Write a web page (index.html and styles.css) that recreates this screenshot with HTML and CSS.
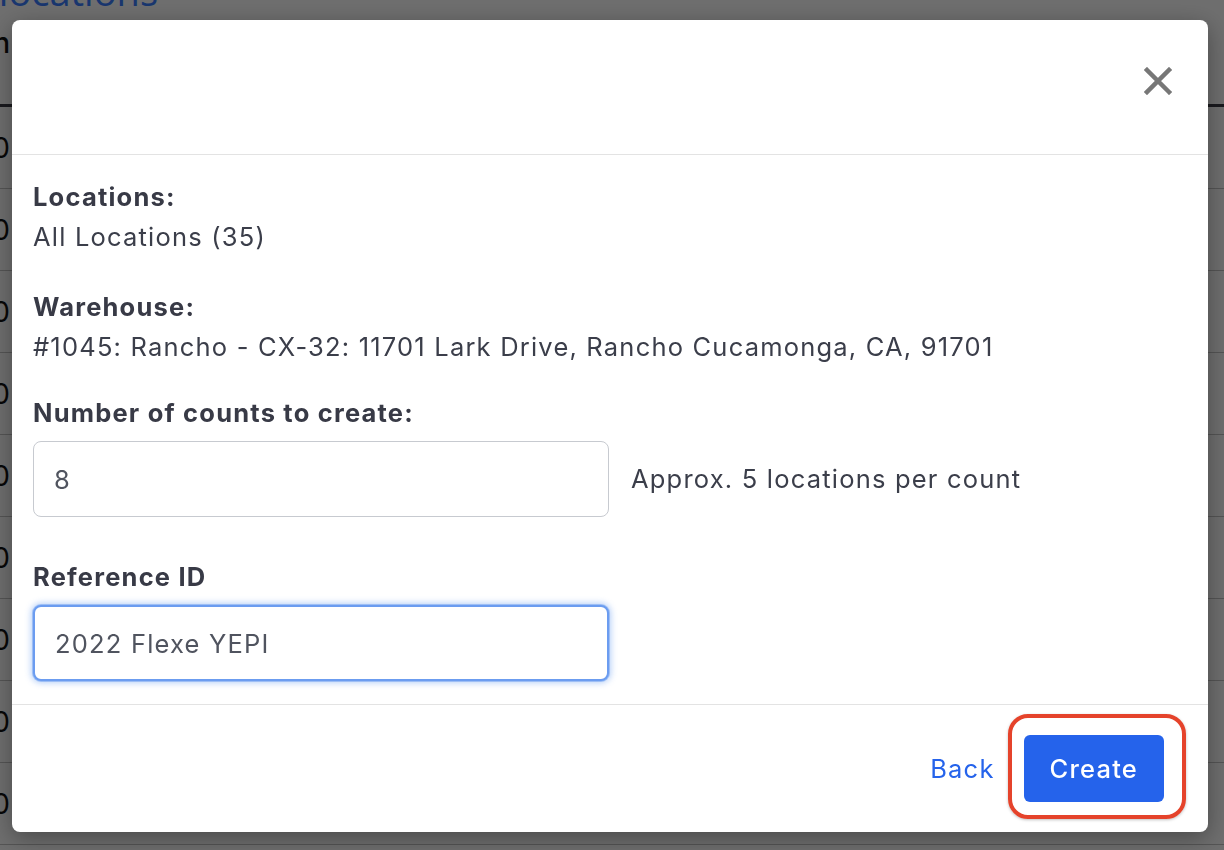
FILE: index.html
```html
<!DOCTYPE html>
<html lang="en">
<head>
  <meta charset="UTF-8">
  <title>Create counts</title>
  <link rel="stylesheet" href="styles.css">
</head>
<body>
  <div class="page">
    <div class="page-title"><h1>Create counts for locations</h1></div>
    <div class="table">
      <div class="table-head"><span class="cell">Location</span></div>
      <div class="table-row"><span class="cell">100</span></div>
      <div class="table-row"><span class="cell">100</span></div>
      <div class="table-row"><span class="cell">100</span></div>
      <div class="table-row"><span class="cell">100</span></div>
      <div class="table-row"><span class="cell">100</span></div>
      <div class="table-row"><span class="cell">100</span></div>
      <div class="table-row"><span class="cell">100</span></div>
      <div class="table-row"><span class="cell">100</span></div>
      <div class="table-row"><span class="cell">100</span></div>
    </div>
  </div>

  <div class="overlay">
    <div class="modal">
      <div class="modal-header">
        <button type="button" class="close-btn" aria-label="Close">
          <svg width="28" height="28" viewBox="0 0 28 28">
            <path d="M3 3 L25 25 M25 3 L3 25" stroke="#777" stroke-width="4.5" stroke-linecap="square" fill="none"/>
          </svg>
        </button>
      </div>
      <div class="modal-body">
        <div class="field field-locations">
          <div class="field-label">Locations:</div>
          <div class="field-value">All Locations (35)</div>
        </div>
        <div class="field field-warehouse">
          <div class="field-label">Warehouse:</div>
          <div class="field-value">#1045: Rancho - CX-32: 11701 Lark Drive, Rancho Cucamonga, CA, 91701</div>
        </div>
        <div class="field field-counts">
          <label class="field-label" for="counts">Number of counts to create:</label>
          <div class="input-row">
            <input type="text" id="counts" class="text-input" value="8">
            <span class="hint">Approx. 5 locations per count</span>
          </div>
        </div>
        <div class="field field-ref">
          <label class="field-label" for="refId">Reference ID</label>
          <div class="input-row">
            <input type="text" id="refId" class="text-input focused" value="2022 Flexe YEPI">
          </div>
        </div>
      </div>
      <div class="modal-footer">
        <a href="#" class="link-btn">Back</a>
        <span class="highlight">
          <button type="button" class="primary-btn">Create</button>
        </span>
      </div>
    </div>
  </div>
</body>
</html>
```

FILE: styles.css
```css
* {
  box-sizing: border-box;
}
html, body {
  margin: 0;
  padding: 0;
  height: 100%;
  overflow: hidden;
}
body {
  font-family: Inter, 'Liberation Sans', Arial, sans-serif;
  background: #fff;
  color: #393c48;
}

/* page behind the dialog */
.page-title {
  display: flex;
  justify-content: flex-end;
  width: 158px;
  height: 42px;
  margin-top: -30px;
}
.page-title h1 {
  margin: 0;
  white-space: nowrap;
  font-family: 'Open Sans', Lato, sans-serif;
  font-size: 38px;
  font-weight: 500;
  line-height: 42px;
  color: #3a7dff;
}
.table {
  width: 100%;
}
.table-head,
.table-row {
  display: flex;
  width: 100%;
}
.cell {
  display: flex;
  justify-content: flex-end;
  width: 10px;
  white-space: nowrap;
  font-size: 28px;
  color: #111;
}
.table-head {
  height: 95px;
  padding-top: 14px;
  border-bottom: 3px solid #3a3a44;
  font-weight: 500;
}
.table-row {
  height: 82px;
  align-items: center;
  border-bottom: 1px solid #c4c4c4;
}

/* dialog */
.overlay {
  position: fixed;
  inset: 0;
  background: rgba(0, 0, 0, 0.57);
  padding: 20px 16px 0 12px;
  letter-spacing: 1.2px;
}
.modal {
  display: flex;
  flex-direction: column;
  height: 812px;
  background: #fff;
  border-radius: 8px;
  box-shadow: 0 6px 24px rgba(0, 0, 0, 0.35);
}
.modal-header {
  display: flex;
  justify-content: flex-end;
  align-items: flex-start;
  height: 135px;
  padding: 47px 36px 0 0;
  border-bottom: 1px solid #e3e3e3;
}
.close-btn {
  display: flex;
  padding: 0;
  border: none;
  background: none;
  cursor: pointer;
}
.modal-body {
  flex: 1;
  padding: 22px 21px 0 21px;
  font-size: 25.5px;
  line-height: 40px;
}
.field-label {
  display: block;
  font-weight: 700;
  color: #383a46;
}
.field-value {
  color: #3b3e4a;
}
.field-locations {
  margin-bottom: 30px;
}
.field-warehouse {
  margin-bottom: 26px;
}
.field-counts .field-label {
  margin-bottom: 8px;
}
.field-counts {
  margin-bottom: 40px;
}
.field-ref .field-label {
  margin-bottom: 8px;
}
.input-row {
  display: flex;
  align-items: center;
  gap: 22px;
}
.text-input {
  width: 576px;
  height: 76px;
  padding: 0 20px;
  border: 1.5px solid #c7cad0;
  border-radius: 8px;
  font-family: inherit;
  font-size: 25.5px;
  letter-spacing: inherit;
  color: #50545f;
  background: #fff;
  outline: none;
}
.text-input.focused {
  border: 2px solid #6b9cf0;
  box-shadow: 0 0 0 1px rgba(96, 150, 240, 0.45), 0 0 6px 2px rgba(96, 150, 240, 0.45);
}
.hint {
  color: #3b3e4a;
}
.modal-footer {
  display: flex;
  justify-content: flex-end;
  align-items: center;
  gap: 29px;
  height: 128px;
  padding-right: 44px;
  border-top: 1px solid #e3e3e3;
}
.link-btn {
  font-size: 25.5px;
  color: #2563eb;
  text-decoration: none;
}
.highlight {
  position: relative;
  display: flex;
}
.highlight::after {
  content: "";
  position: absolute;
  top: -21px;
  left: -16px;
  right: -22px;
  bottom: -17px;
  border: 4px solid #e5432b;
  border-radius: 20px;
  box-shadow: 0 1px 3px rgba(0, 0, 0, 0.25);
  pointer-events: none;
}
.primary-btn {
  height: 67px;
  padding: 0 26px;
  border: none;
  border-radius: 6px;
  background: #2563eb;
  color: #fff;
  font-family: inherit;
  font-size: 25.5px;
  font-weight: 500;
  letter-spacing: inherit;
  cursor: pointer;
}
```
